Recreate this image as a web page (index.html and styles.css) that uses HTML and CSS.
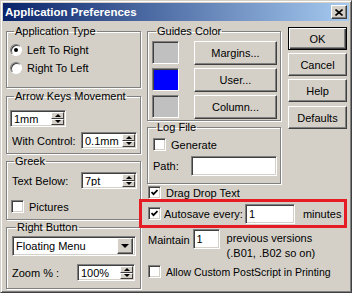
FILE: index.html
```html
<!DOCTYPE html>
<html lang="en">
<head>
    <meta charset="UTF-8">
    <meta name="viewport" content="width=device-width, initial-scale=1.0">
    <title>Application Preferences</title>
    <link rel="stylesheet" href="styles.css">
</head>
<body>
    <div class="window">
        <div class="titlebar">
            <span class="title">Application Preferences</span>
            <button class="close-btn" type="button">
                <svg width="8" height="7" viewBox="0 0 8 7"><path d="M0.5 0.5L7.5 6.5M7.5 0.5L0.5 6.5" stroke="#000" stroke-width="1.6" fill="none"/></svg>
            </button>
        </div>

        <div class="dialog">
            <div class="col-left">
                <fieldset class="group group-type">
                    <legend>Application Type</legend>
                    <label class="option"><span class="radio checked"></span>Left To Right</label>
                    <label class="option"><span class="radio"></span>Right To Left</label>
                </fieldset>

                <fieldset class="group group-arrow">
                    <legend>Arrow Keys Movement</legend>
                    <div class="spin spin-first">
                        <input type="text" value="1mm">
                        <span class="spin-btns"><span class="spin-up"></span><span class="spin-down"></span></span>
                    </div>
                    <div class="field-row">
                        <span class="field-label">With Control:</span>
                        <div class="spin">
                            <input type="text" value="0.1mm">
                            <span class="spin-btns"><span class="spin-up"></span><span class="spin-down"></span></span>
                        </div>
                    </div>
                </fieldset>

                <fieldset class="group group-greek">
                    <legend>Greek</legend>
                    <div class="field-row">
                        <span class="field-label">Text Below:</span>
                        <div class="spin">
                            <input type="text" value="7pt">
                            <span class="spin-btns"><span class="spin-up"></span><span class="spin-down"></span></span>
                        </div>
                    </div>
                    <label class="check-row"><span class="checkbox"></span>Pictures</label>
                </fieldset>

                <fieldset class="group group-button">
                    <legend>Right Button</legend>
                    <div class="select">
                        <span class="select-text">Floating Menu</span>
                        <span class="select-btn"></span>
                    </div>
                    <div class="field-row">
                        <span class="field-label">Zoom % :</span>
                        <div class="spin spin-zoom">
                            <input type="text" value="100%">
                            <span class="spin-btns"><span class="spin-up"></span><span class="spin-down"></span></span>
                        </div>
                    </div>
                </fieldset>
            </div>

            <div class="col-right">
                <div class="top-row">
                    <div class="col-mid">
                        <fieldset class="group group-guides">
                            <legend>Guides Color</legend>
                            <div class="guide-row">
                                <span class="swatch swatch-gray"></span>
                                <button class="btn guide-btn" type="button">Margins...</button>
                            </div>
                            <div class="guide-row">
                                <span class="swatch swatch-blue"></span>
                                <button class="btn guide-btn" type="button">User...</button>
                            </div>
                            <div class="guide-row">
                                <span class="swatch swatch-gray"></span>
                                <button class="btn guide-btn" type="button">Column...</button>
                            </div>
                        </fieldset>

                        <fieldset class="group group-log">
                            <legend>Log File</legend>
                            <label class="check-row"><span class="checkbox"></span>Generate</label>
                            <div class="path-row">
                                <span>Path:</span>
                                <input class="textbox path-input" type="text" value="">
                            </div>
                        </fieldset>
                    </div>

                    <div class="col-buttons">
                        <button class="btn btn-default" type="button">OK</button>
                        <button class="btn" type="button">Cancel</button>
                        <button class="btn" type="button">Help</button>
                        <button class="btn btn-defaults" type="button">Defaults</button>
                    </div>
                </div>

                <label class="check-row drag-row"><span class="checkbox checked"></span>Drag Drop Text</label>

                <div class="autosave">
                    <label class="check-row"><span class="checkbox checked"></span>Autosave every:</label>
                    <input class="textbox autosave-input" type="text" value="1">
                    <span class="minutes">minutes</span>
                </div>

                <div class="maintain-row">
                    <span class="maintain-label">Maintain</span>
                    <input class="textbox maintain-input" type="text" value="1">
                    <span class="maintain-text">previous versions<br>(.B01, .B02 so on)</span>
                </div>

                <label class="check-row allow-row"><span class="checkbox"></span>Allow Custom PostScript in Printing</label>
            </div>
        </div>
    </div>
</body>
</html>
```

FILE: styles.css
```css
* {
    box-sizing: border-box;
}

body {
    margin: 0;
    font-family: "Liberation Sans", Arial, sans-serif;
    font-size: 11px;
    color: #000;
    white-space: nowrap;
    background-color: #d4d0c8;
}

.window {
    width: 352px;
    height: 293px;
    padding: 2px;
    border: 1px solid;
    border-color: #d4d0c8 #404040 #404040 #d4d0c8;
    box-shadow: inset 1px 1px #fff, inset -1px -1px #808080;
    background-color: #d4d0c8;
}

.titlebar {
    display: flex;
    align-items: center;
    height: 18px;
    padding: 0 2px;
    background: linear-gradient(to right, #0a246a, #a6caf0);
    color: #fff;
}

.title {
    font-weight: bold;
    font-size: 11.5px;
}

.close-btn {
    display: flex;
    align-items: center;
    justify-content: center;
    width: 16px;
    height: 14px;
    margin-left: auto;
    padding: 0;
    background-color: #d4d0c8;
    border: 1px solid;
    border-color: #fff #404040 #404040 #fff;
    box-shadow: inset -1px -1px #808080;
}

.dialog {
    display: flex;
    padding: 4px 0 0 3px;
}

.col-left {
    width: 135px;
    margin-right: 6px;
}

.col-right {
    flex: 1;
    min-width: 0;
}

.top-row {
    display: flex;
}

.col-mid {
    width: 134px;
    margin-right: 7px;
}

/* group boxes */
.group {
    min-width: 0;
    margin: 0;
    padding: 0 3px 0 3px;
    border: 1px solid #808080;
    box-shadow: inset 1px 1px #fff, 1px 1px #fff;
}

.group legend {
    margin-left: 4px;
    padding: 0 1px;
    line-height: 13px;
}

.group-type {
    height: 63px;
    padding-top: 3px;
}

.group-arrow {
    height: 64px;
    margin-top: 2px;
    padding-top: 7px;
}

.group-greek {
    height: 65px;
    margin-top: 1px;
    padding-top: 4px;
}

.group-button {
    height: 68px;
    margin-top: 1px;
    padding-top: 2px;
    padding-left: 5px;
}

.group-guides {
    height: 96px;
    padding-top: 3px;
    padding-left: 4px;
}

.group-log {
    height: 63px;
    padding-top: 4px;
    padding-left: 4px;
}

/* radios and checks */
.option {
    display: flex;
    align-items: center;
    height: 18px;
}

.radio {
    display: flex;
    align-items: center;
    justify-content: center;
    width: 12px;
    height: 12px;
    margin-right: 5px;
    border-radius: 50%;
    background-color: #fff;
    border: 1px solid;
    border-color: #808080 #fff #fff #808080;
    box-shadow: inset 1px 1px #404040;
}

.radio.checked::after {
    content: "";
    width: 4px;
    height: 4px;
    border-radius: 50%;
    background-color: #000;
}

.check-row {
    display: flex;
    align-items: center;
    height: 13px;
}

.checkbox {
    display: flex;
    flex: none;
    align-items: center;
    justify-content: center;
    width: 13px;
    height: 13px;
    margin-right: 5px;
    background-color: #fff;
    border: 1px solid;
    border-color: #808080 #fff #fff #808080;
    box-shadow: inset 1px 1px #404040, inset -1px -1px #d4d0c8;
}

.checkbox.checked::after {
    content: "";
    width: 7px;
    height: 7px;
    background: url("data:image/svg+xml,%3Csvg xmlns='http://www.w3.org/2000/svg' width='7' height='7'%3E%3Cpath d='M0.5 3L2.5 5.2L6.5 1' stroke='%23000' stroke-width='1.8' fill='none'/%3E%3C/svg%3E") no-repeat;
}

/* spin boxes */
.spin {
    display: flex;
    width: 56px;
    height: 17px;
    padding: 2px;
    background-color: #fff;
    border: 1px solid;
    border-color: #808080 #fff #fff #808080;
    box-shadow: inset 1px 1px #404040, inset -1px -1px #d4d0c8;
}

.spin input {
    flex: 1;
    min-width: 0;
    padding: 0 1px;
    border: 0;
    background: transparent;
    font: inherit;
    outline: none;
}

.spin-btns {
    display: flex;
    flex-direction: column;
    width: 13px;
    margin: -1px -1px -1px 0;
}

.spin-btns span {
    flex: 1;
    display: flex;
    align-items: center;
    justify-content: center;
    background-color: #d4d0c8;
    border: 1px solid;
    border-color: #fff #404040 #404040 #fff;
}

.spin-up::after {
    content: "";
    border-left: 3px solid transparent;
    border-right: 3px solid transparent;
    border-bottom: 3px solid #000;
}

.spin-down::after {
    content: "";
    border-left: 3px solid transparent;
    border-right: 3px solid transparent;
    border-top: 3px solid #000;
}

.field-row {
    display: flex;
    align-items: center;
    justify-content: space-between;
    margin-top: 5px;
    padding-left: 2px;
}

.group-greek .field-row {
    margin-top: 0;
}

.group-greek .check-row {
    margin-top: 11px;
    padding-left: 1px;
}

.group-button .field-row {
    margin-top: 8px;
    padding: 0 2px 0 0;
}

.spin-zoom {
    width: 58px;
}

/* dropdown */
.select {
    display: flex;
    align-items: center;
    width: 124px;
    height: 20px;
    padding: 2px;
    background-color: #fff;
    border: 1px solid;
    border-color: #808080 #fff #fff #808080;
    box-shadow: inset 1px 1px #404040, inset -1px -1px #d4d0c8;
}

.select-text {
    flex: 1;
    padding-left: 1px;
}

.select-btn {
    display: flex;
    align-items: center;
    justify-content: center;
    width: 16px;
    height: 16px;
    background-color: #d4d0c8;
    border: 1px solid;
    border-color: #fff #404040 #404040 #fff;
    box-shadow: inset -1px -1px #808080;
}

.select-btn::after {
    content: "";
    border-left: 4px solid transparent;
    border-right: 4px solid transparent;
    border-top: 4px solid #000;
}

/* buttons */
.btn {
    padding: 0;
    font: inherit;
    color: #000;
    background-color: #d4d0c8;
    border: 1px solid;
    border-color: #fff #404040 #404040 #fff;
    box-shadow: inset -1px -1px #808080;
}

.guide-row {
    display: flex;
    align-items: center;
    justify-content: space-between;
    height: 23px;
    margin-bottom: 4px;
}

.swatch {
    width: 27px;
    height: 23px;
    border: 1px solid;
    border-color: #808080 #fff #fff #808080;
    box-shadow: inset 1px 1px #404040;
}

.swatch-gray {
    background-color: #c0c0c0;
}

.swatch-blue {
    background-color: #0000ff;
}

.guide-btn {
    width: 83px;
    height: 24px;
}

.col-buttons {
    display: flex;
    flex-direction: column;
    width: 59px;
    padding-top: 2px;
}

.col-buttons .btn {
    height: 23px;
    margin-bottom: 3px;
}

.col-buttons .btn-default {
    border: 1px solid #000;
    box-shadow: inset 1px 1px #fff, inset -1px -1px #404040, inset -2px -2px #808080;
}

.col-buttons .btn-defaults {
    margin-top: 1px;
}

/* text boxes */
.textbox {
    height: 20px;
    padding: 0 3px;
    font: inherit;
    background-color: #fff;
    border: 1px solid;
    border-color: #808080 #fff #fff #808080;
    box-shadow: inset 1px 1px #404040, inset -1px -1px #d4d0c8;
    outline: none;
}

.group-log .check-row {
    padding-left: 1px;
}

.path-row {
    display: flex;
    align-items: center;
    justify-content: space-between;
    margin-top: 5px;
    padding-left: 1px;
}

.path-input {
    width: 86px;
}

.drag-row {
    margin-top: 2px;
    padding-left: 1px;
}

.autosave {
    display: flex;
    align-items: center;
    height: 29px;
    margin: 0 2px 0 -8px;
    padding-left: 6px;
    border: 3px solid #e51c23;
}

.autosave .checkbox {
    margin-right: 3px;
}

.autosave-input {
    flex: none;
    width: 50px;
    margin-left: 2px;
}

.minutes {
    margin-left: 8px;
}

.maintain-row {
    display: flex;
    align-items: flex-start;
    margin-top: 1px;
    padding-left: 1px;
}

.maintain-label {
    margin-top: 5px;
}

.maintain-input {
    flex: none;
    width: 27px;
    margin-left: 3px;
}

.maintain-text {
    margin: 2px 0 0 7px;
    line-height: 15px;
}

.allow-row {
    margin-top: 4px;
    padding-left: 1px;
    font-size: 10.5px;
}
```
